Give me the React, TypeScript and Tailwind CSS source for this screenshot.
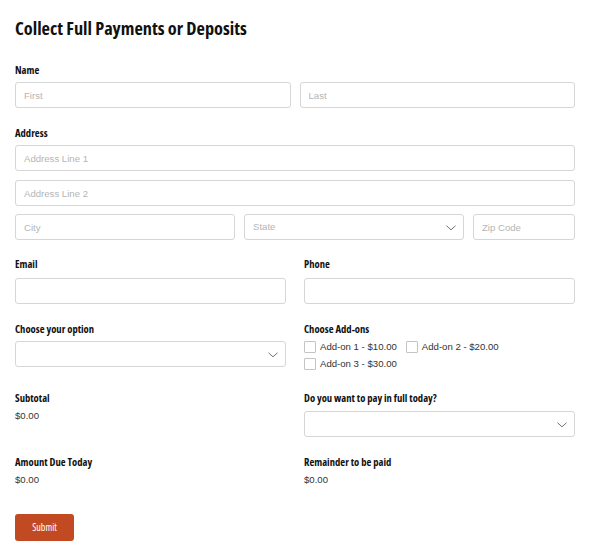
const label = "block font-['Open_Sans',sans-serif] font-bold font-stretch-condensed text-[10.6px] leading-[14px] text-[#111]";
const input = "h-[26px] w-full rounded-[3px] border border-[#d6d6d6] bg-white px-[8px] font-['Liberation_Sans',Arial,sans-serif] text-[9.6px] text-[#333] placeholder:text-[#b5b5b5] outline-none";
const value = "font-['Liberation_Sans',Arial,sans-serif] text-[9.6px] leading-[14px] text-[#333]";

function Select({ placeholder = '' }: { placeholder?: string }) {
    return (
        <div className="flex h-[26px] w-full items-center justify-between rounded-[3px] border border-[#d6d6d6] bg-white pl-[8px] pr-[7px]">
            <span className="font-['Liberation_Sans',Arial,sans-serif] text-[9.6px] text-[#b5b5b5]">{placeholder}</span>
            <svg viewBox="0 0 11 6" fill="none" className="mt-[2px] h-[6px] w-[10px] shrink-0">
                <path d="M0.5 0.5L5.5 5L10.5 0.5" stroke="#666" strokeWidth="1" />
            </svg>
        </div>
    );
}

function Check({ text }: { text: string }) {
    return (
        <label className="flex h-[17px] items-center gap-[4px]">
            <span className="h-[12px] w-[12px] rounded-[1px] border border-[#c4c4c4] bg-white" />
            <span className="font-['Liberation_Sans',Arial,sans-serif] text-[9.6px] text-[#333]">{text}</span>
        </label>
    );
}

export default function App() {
    return (
        <div className="w-[590px] bg-white px-[15px] pt-[16px] pb-[14px]">
            <h1 className="mb-[24px] font-['Open_Sans',sans-serif] text-[18.3px] font-bold font-stretch-condensed leading-[23px] text-[#111]">
                Collect Full Payments or Deposits
            </h1>

            <div className="mb-[18px]">
                <span className={`${label} mb-[5px]`}>Name</span>
                <div className="grid grid-cols-2 gap-[9px]">
                    <input className={input} placeholder="First" />
                    <input className={input} placeholder="Last" />
                </div>
            </div>

            <div className="mb-[17px]">
                <span className={`${label} mb-[5px]`}>Address</span>
                <div className="flex flex-col gap-[9px]">
                    <input className={input} placeholder="Address Line 1" />
                    <input className={input} placeholder="Address Line 2" />
                </div>
                <div className="mt-[8px] grid grid-cols-[220px_220px_1fr] gap-[9px]">
                    <input className={input} placeholder="City" />
                    <Select placeholder="State" />
                    <input className={input} placeholder="Zip Code" />
                </div>
            </div>

            <div className="mb-[18px] grid grid-cols-2 gap-x-[18px]">
                <div>
                    <span className={`${label} mb-[5px]`}>Email</span>
                    <input className={input} />
                </div>
                <div>
                    <span className={`${label} mb-[5px]`}>Phone</span>
                    <input className={input} />
                </div>
            </div>

            <div className="mb-[18px] grid grid-cols-2 items-start gap-x-[18px]">
                <div>
                    <span className={`${label} mb-[5px]`}>Choose your option</span>
                    <Select />
                </div>
                <div>
                    <span className={`${label} mb-[3px]`}>Choose Add-ons</span>
                    <div className="flex flex-wrap gap-x-[9px]">
                        <Check text="Add-on 1 - $10.00" />
                        <Check text="Add-on 2 - $20.00" />
                    </div>
                    <Check text="Add-on 3 - $30.00" />
                </div>
            </div>

            <div className="mb-[18px] grid grid-cols-2 items-start gap-x-[18px]">
                <div>
                    <span className={`${label} mb-[4px]`}>Subtotal</span>
                    <p className={value}>$0.00</p>
                </div>
                <div>
                    <span className={`${label} mb-[6px]`}>Do you want to pay in full today?</span>
                    <Select />
                </div>
            </div>

            <div className="mb-[26px] grid grid-cols-2 items-start gap-x-[18px]">
                <div>
                    <span className={`${label} mb-[4px]`}>Amount Due Today</span>
                    <p className={value}>$0.00</p>
                </div>
                <div>
                    <span className={`${label} mb-[4px]`}>Remainder to be paid</span>
                    <p className={value}>$0.00</p>
                </div>
            </div>

            <button className="h-[27px] w-[59px] rounded-[3px] bg-[#c24a22] font-['Open_Sans',sans-serif] text-[10px] font-stretch-condensed text-white">
                Submit
            </button>
        </div>
    );
}
